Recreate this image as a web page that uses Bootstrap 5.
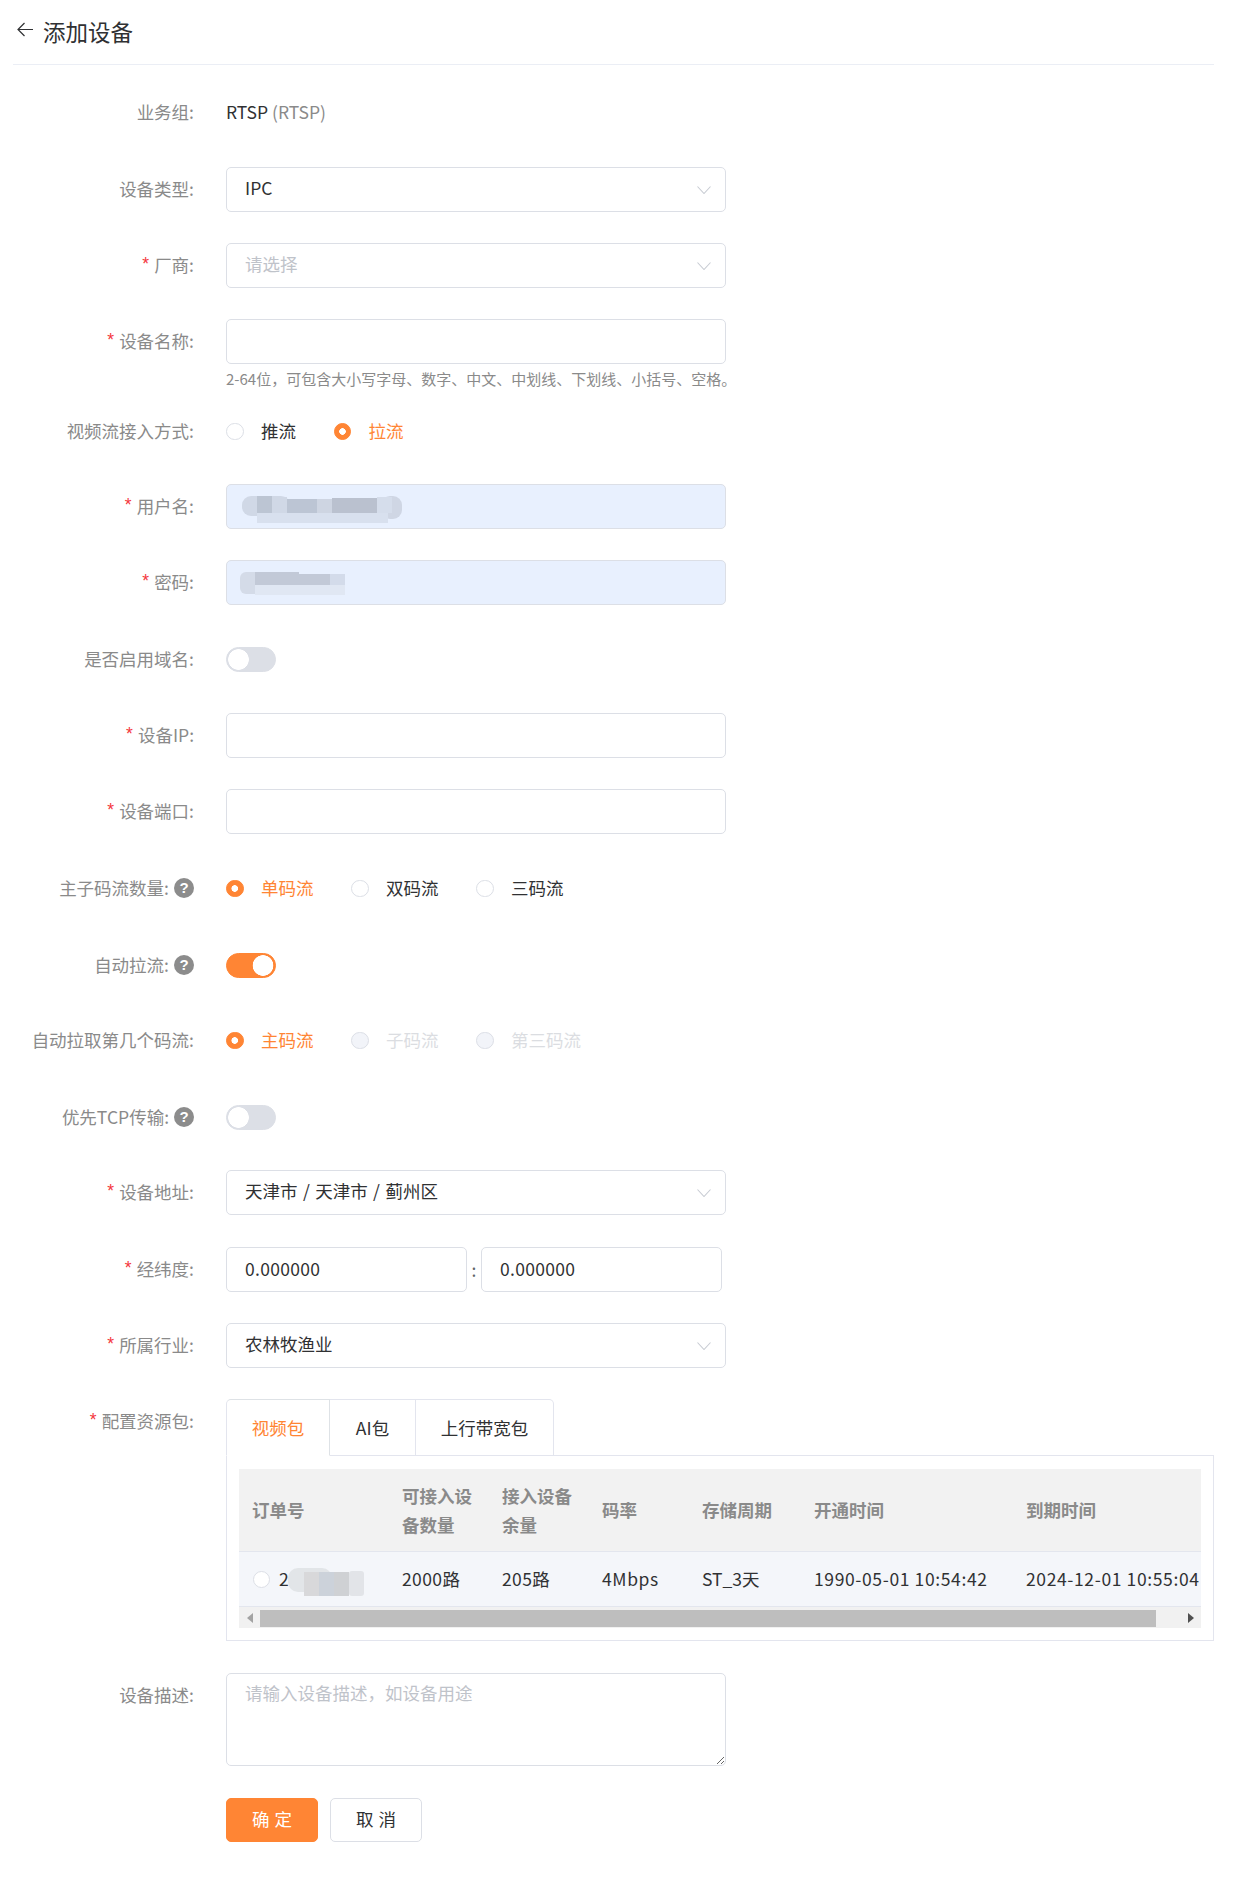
<!DOCTYPE html>
<html lang="zh-CN">
<head>
<meta charset="utf-8">
<title>添加设备</title>
<link href="https://cdn.jsdelivr.net/npm/bootstrap@5.3.0/dist/css/bootstrap.min.css" rel="stylesheet">
<style>
body{font-family:"Noto Sans CJK SC","Microsoft YaHei",sans-serif;font-size:17.5px;color:#303133;background:#fff;line-height:1.6}
.pg{padding:0 24px 0 13px}
.hd{height:65px;border-bottom:1px solid #ebeef5;margin-bottom:25px;font-size:22.5px;padding:0 0 2px 4px}
.hd svg{margin-right:10px;flex:none;margin-top:-4px}
.fr{margin-bottom:31px;min-height:45px}
.g30{margin-bottom:30px}.g32{margin-bottom:32px}.g15{margin-bottom:15px}
.flab{width:181px;margin-right:32px;flex:none;text-align:right;color:#8a8a8a;line-height:43px;white-space:nowrap;height:45px}
.req{color:#f4363c;font-family:"Liberation Sans",sans-serif;margin-right:5px;position:relative;top:-2px}
.qm{width:20px;height:20px;border-radius:50%;background:#8c8c8c;color:#fff;font:bold 15px/20px "Liberation Sans",sans-serif;display:inline-block;text-align:center;margin-left:5px;vertical-align:2px}
.fval{width:500px;flex:none;position:relative}
.plain-val{height:43px}
.fctl.form-control,.fctl.form-select{height:45px;border:1px solid #dcdfe6;border-radius:5px;padding:0 18px 2px 18px;font-size:17.5px;color:#303133;font-family:inherit;box-shadow:none}
.fctl.form-select{background-image:url("data:image/svg+xml,%3Csvg xmlns='http://www.w3.org/2000/svg' viewBox='0 0 14 8'%3E%3Cpath d='M.5.5 7 7.5 13.5.5' fill='none' stroke='%23c8ccd3' stroke-width='1.1'/%3E%3C/svg%3E");background-position:right 14px center;background-size:14px 8px;word-spacing:1.5px}
.fctl.is-ph{color:#bfc3ca}
.fctl.auto-fill{background:#e8f0fe}
.hint{font-size:15px;color:#8a8a8a;line-height:30px;white-space:nowrap}
.mask{position:absolute;left:0;top:0;pointer-events:none}
.rad-set{height:45px;gap:37.5px}
.rad-set .form-check{padding:0;margin:0;min-height:0;display:flex;align-items:center;gap:17.5px}
.rad-set .form-check-input{width:17.5px;height:17.5px;margin:0;float:none;border:1px solid #dcdfe6;flex:none}
.form-check-input:checked[type=radio]{background-color:#ff8534;border-color:#ff8534;background-image:radial-gradient(circle,#fff 3px,transparent 3.6px);background-size:auto}
.rad-set .form-check-input:disabled{background-color:#f2f4f9;opacity:1}
.rad-set .form-check-input:checked:disabled{background-color:#ff8534}
.rad-set .form-check-label{color:#303133;opacity:1;line-height:43px;margin-bottom:2px}
.rad-set .on .form-check-label{color:#ff8534}
.rad-set .off .form-check-label{color:#b9bdc5}
.sw.form-switch{padding:0;margin:0;min-height:0;height:45px;display:flex;align-items:center}
.sw .form-check-input{width:50px;height:25px;margin:0;float:none;border:1px solid #dcdfe6;background-color:#dcdfe6;border-radius:13px;background-image:radial-gradient(circle at 11.5px 50%,#fff 10px,transparent 10.6px);background-size:auto;background-position:0 0;box-shadow:none}
.sw .form-check-input:checked{background-color:#ff8534;border-color:#ff8534;background-image:radial-gradient(circle at 36px 50%,#fff 10px,transparent 10.6px);background-position:0 0}
.geo .form-control{width:241px;flex:none;letter-spacing:.3px}
.geo-sep{width:14px;text-align:center;color:#606266}
.pack{flex:1 1 auto;min-width:0}
.pack .nav-tabs{--bs-nav-tabs-border-color:#e3e5ee;border-bottom:0;width:328px;position:relative;z-index:1}
.pack .nav-link{height:57px;padding:0;font-size:17.5px;color:#303133;border:1px solid #e3e5ee;border-left:0;border-radius:0;background:#fff;line-height:55px;text-align:center;margin:0}
.pack .nav-item:first-child .nav-link{border-left:1px solid #e3e5ee;border-radius:5px 0 0 0;width:104px}
.pack .nav-item:nth-child(2) .nav-link{width:86px}
.pack .nav-item:nth-child(3) .nav-link{width:138px;border-radius:0 5px 0 0}
.pack .nav-link.active{color:#ff8534;border-bottom-color:#fff}
.pack-body{border:1px solid #e3e5ee;margin-top:-1px;padding:13px 12px 12px 12px;height:186px}
.tbl-wrap{overflow:hidden;position:relative}
.res-tb.table{margin:0;width:1220px;table-layout:fixed;--bs-table-bg:transparent;border-color:#e3e6ee;line-height:29px}
.res-tb th{background:#f2f2f2;color:#8a8a8a;font-weight:700;height:82px;vertical-align:middle;padding:0 13px;border-bottom:1px solid #e3e6ee;font-size:17.5px}
.res-tb td{background:#f4f6fa;color:#303133;height:55px;vertical-align:middle;padding:0 13px;white-space:nowrap;border-bottom:1px solid #e3e6ee;font-size:17.5px}
.res-tb td.first{position:relative;padding-left:40px}
.res-tb td.num-a{letter-spacing:.4px}
.res-tb td.num-b{letter-spacing:.62px}
.res-tb .form-check-input{position:absolute;left:14px;top:19px;width:17px;height:17px;margin:0;border-color:#dcdfe6}
.sbar{height:21px;background:#f1f1f1;padding:3px 0 1px}
.sb-btn{width:21px;flex:none}
.sb-l{border-style:solid;border-width:5px 6px 5px 0;border-color:transparent #a3a3a3 transparent transparent;width:0;height:0}
.sb-r{border-style:solid;border-width:5px 0 5px 6px;border-color:transparent transparent transparent #505050;width:0;height:0}
.sb-track{flex:1 1 auto}
.sb-thumb{width:896px;height:100%;background:#bebebe}
.desc.form-control{height:93px;padding:5px 18px;border:1px solid #dcdfe6;border-radius:5px;font-size:17.5px;line-height:28px;box-shadow:none}
.desc::placeholder{color:#bfc3ca}
.act .btn{width:92px;height:44px;border-radius:5px;font-size:17.5px;padding:0 0 3px;line-height:39px;word-spacing:1px}
.btn-ok.btn{background:#ff8534;border:1px solid #ff8534;color:#fff}
.btn-no.btn{background:#fff;border:1px solid #dcdfe6;color:#303133;margin-left:12px}
</style>
</head>
<body>
<div class="pg">
  <div class="hd d-flex align-items-center">
    <svg width="16" height="15" viewBox="0 0 16 15" fill="none" stroke="#303133" stroke-width="1.2"><path d="M16 7.5H1M7.5 1 1 7.5 7.5 14"/></svg>
    <span>添加设备</span>
  </div>
  <form>
    <div class="d-flex fr g32"><label class="flab">业务组:</label><div class="fval plain-val d-flex align-items-center">RTSP&nbsp;<span style="color:#8a8a8a">(RTSP)</span></div></div>
    <div class="d-flex fr"><label class="flab">设备类型:</label><div class="fval"><select class="form-select fctl"><option>IPC</option></select></div></div>
    <div class="d-flex fr"><label class="flab"><span class="req">*</span>厂商:</label><div class="fval"><select class="form-select fctl is-ph"><option>请选择</option></select></div></div>
    <div class="d-flex fr g15"><label class="flab"><span class="req">*</span>设备名称:</label><div class="fval"><input class="form-control fctl" type="text"><div class="hint">2-64位&#65292;可包含大小写字母、数字、中文、中划线、下划线、小括号、空格。</div></div></div>
    <div class="d-flex fr g30"><label class="flab">视频流接入方式:</label><div class="fval d-flex rad-set align-items-center">
      <div class="form-check"><input class="form-check-input" type="radio" name="r1" id="r11"><label class="form-check-label" for="r11">推流</label></div>
      <div class="form-check on"><input class="form-check-input" type="radio" name="r1" id="r12" checked><label class="form-check-label" for="r12">拉流</label></div>
    </div></div>
    <div class="d-flex fr"><label class="flab"><span class="req">*</span>用户名:</label><div class="fval"><input class="form-control fctl auto-fill" type="text">
      <svg class="mask" width="200" height="45" viewBox="0 0 200 45"><rect x="16" y="12" width="48" height="20" rx="9" fill="#d0d8e6"/><rect x="155" y="12" width="21" height="23" rx="9" fill="#cfd6e4"/><rect x="31" y="29" width="131" height="10" fill="#d8e0ee"/><rect x="31" y="12" width="15" height="17" fill="#bcc5d3"/><rect x="46" y="13" width="15" height="16" fill="#d0d8e6"/><rect x="61" y="15" width="30" height="14" fill="#bcc5d4"/><rect x="91" y="15" width="15" height="14" fill="#ced5e2"/><rect x="106" y="14" width="45" height="15" fill="#bac1cf"/><rect x="151" y="13" width="15" height="16" fill="#d5ddeb"/></svg>
    </div></div>
    <div class="d-flex fr g32"><label class="flab"><span class="req">*</span>密码:</label><div class="fval"><input class="form-control fctl auto-fill" type="text">
      <svg class="mask" width="200" height="45" viewBox="0 0 200 45"><rect x="14" y="12" width="40" height="22" rx="6" fill="#d4dbe8"/><rect x="29" y="12" width="44" height="11" fill="#c2c9d7"/><rect x="29" y="14" width="75" height="11" fill="#c2c9d7"/><rect x="29" y="25" width="75" height="10" fill="#e0e7f3"/><rect x="104" y="14" width="15" height="11" fill="#d3dbea"/><rect x="104" y="25" width="15" height="10" fill="#e0e7f3"/></svg>
    </div></div>
    <div class="d-flex fr"><label class="flab">是否启用域名:</label><div class="fval"><div class="form-check form-switch sw"><input class="form-check-input" type="checkbox" role="switch"></div></div></div>
    <div class="d-flex fr"><label class="flab"><span class="req">*</span>设备IP:</label><div class="fval"><input class="form-control fctl" type="text"></div></div>
    <div class="d-flex fr g32"><label class="flab"><span class="req">*</span>设备端口:</label><div class="fval"><input class="form-control fctl" type="text"></div></div>
    <div class="d-flex fr g32"><label class="flab">主子码流数量:<span class="qm">?</span></label><div class="fval d-flex rad-set align-items-center">
      <div class="form-check on"><input class="form-check-input" type="radio" name="r2" id="r21" checked><label class="form-check-label" for="r21">单码流</label></div>
      <div class="form-check"><input class="form-check-input" type="radio" name="r2" id="r22"><label class="form-check-label" for="r22">双码流</label></div>
      <div class="form-check"><input class="form-check-input" type="radio" name="r2" id="r23"><label class="form-check-label" for="r23">三码流</label></div>
    </div></div>
    <div class="d-flex fr g30"><label class="flab">自动拉流:<span class="qm">?</span></label><div class="fval"><div class="form-check form-switch sw"><input class="form-check-input" type="checkbox" role="switch" checked></div></div></div>
    <div class="d-flex fr g32"><label class="flab">自动拉取第几个码流:</label><div class="fval d-flex rad-set align-items-center">
      <div class="form-check on"><input class="form-check-input" type="radio" name="r3" id="r31" checked><label class="form-check-label" for="r31">主码流</label></div>
      <div class="form-check off"><input class="form-check-input" type="radio" name="r3" id="r32" disabled><label class="form-check-label" for="r32">子码流</label></div>
      <div class="form-check off"><input class="form-check-input" type="radio" name="r3" id="r33" disabled><label class="form-check-label" for="r33">第三码流</label></div>
    </div></div>
    <div class="d-flex fr g30"><label class="flab">优先TCP传输:<span class="qm">?</span></label><div class="fval"><div class="form-check form-switch sw"><input class="form-check-input" type="checkbox" role="switch"></div></div></div>
    <div class="d-flex fr g32"><label class="flab"><span class="req">*</span>设备地址:</label><div class="fval"><select class="form-select fctl"><option>天津市 / 天津市 / 蓟州区</option></select></div></div>
    <div class="d-flex fr"><label class="flab"><span class="req">*</span>经纬度:</label><div class="fval d-flex align-items-center geo"><input class="form-control fctl" type="text" value="0.000000"><span class="geo-sep">:</span><input class="form-control fctl" type="text" value="0.000000"></div></div>
    <div class="d-flex fr"><label class="flab"><span class="req">*</span>所属行业:</label><div class="fval"><select class="form-select fctl"><option>农林牧渔业</option></select></div></div>
    <div class="d-flex fr g32"><label class="flab"><span class="req">*</span>配置资源包:</label>
      <div class="pack">
        <ul class="nav nav-tabs">
          <li class="nav-item"><a class="nav-link active" href="#">视频包</a></li>
          <li class="nav-item"><a class="nav-link" href="#">AI包</a></li>
          <li class="nav-item"><a class="nav-link" href="#">上行带宽包</a></li>
        </ul>
        <div class="pack-body">
          <div class="tbl-wrap">
            <table class="table res-tb">
              <colgroup><col style="width:150px"><col style="width:100px"><col style="width:100px"><col style="width:100px"><col style="width:112px"><col style="width:212px"><col style="width:446px"></colgroup>
              <thead><tr><th>订单号</th><th>可接入设备数量</th><th>接入设备余量</th><th>码率</th><th>存储周期</th><th>开通时间</th><th>到期时间</th></tr></thead>
              <tbody><tr>
                <td class="first"><input class="form-check-input" type="radio" name="o1">2
                  <svg class="mask" style="left:49px;top:5px" width="82" height="45" viewBox="0 0 82 45"><rect x="0" y="11" width="44" height="24" rx="10" fill="#e2e5e8"/><rect x="16" y="15" width="15" height="24" fill="#d8d8da"/><rect x="31" y="15" width="15" height="24" fill="#ccd2da"/><rect x="46" y="15" width="15" height="24" fill="#cfd1d4"/><rect x="61" y="14" width="15" height="25" rx="3" fill="#e2e4e8"/></svg>
                </td>
                <td class="num-a">2000路</td><td class="num-a">205路</td><td class="num-b">4Mbps</td><td>ST_3天</td><td class="num-b">1990-05-01 10:54:42</td><td class="num-b">2024-12-01 10:55:04</td>
              </tr></tbody>
            </table>
          </div>
          <div class="sbar d-flex align-items-stretch">
            <div class="sb-btn d-flex align-items-center justify-content-center"><div class="sb-l"></div></div>
            <div class="sb-track"><div class="sb-thumb"></div></div>
            <div class="sb-btn d-flex align-items-center justify-content-center"><div class="sb-r"></div></div>
          </div>
        </div>
      </div>
    </div>
    <div class="d-flex fr g32"><label class="flab">设备描述:</label><div class="fval"><textarea class="form-control desc" placeholder="请输入设备描述&#65292;如设备用途"></textarea></div></div>
    <div class="d-flex act"><div class="flab"></div><div class="fval"><button type="button" class="btn btn-ok">确 定</button><button type="button" class="btn btn-no">取 消</button></div></div>
  </form>
</div>
<script src="https://cdn.jsdelivr.net/npm/bootstrap@5.3.0/dist/js/bootstrap.bundle.min.js"></script>
</body>
</html>
